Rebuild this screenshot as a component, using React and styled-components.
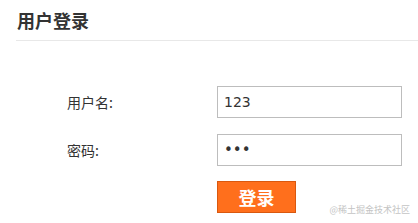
import React from "react";
import styled, { createGlobalStyle } from "styled-components";

const Global = createGlobalStyle`
  html, body { margin: 0; padding: 0; background: #fff; }
  body { font-family: "Noto Sans CJK SC", "Noto Sans", sans-serif; color: #333; }
`;

const Page = styled.div`
  width: 418px;
  height: 223px;
  position: relative;
  overflow: hidden;
  padding-left: 16px;
  box-sizing: border-box;
`;

const Header = styled.div`
  height: 41px;
  border-bottom: 1px solid #e8e8e8;
  display: flex;
  align-items: center;
  padding-left: 1px;
  box-sizing: border-box;
`;

const Title = styled.h1`
  margin: 0;
  font-size: 18px;
  font-weight: 700;
  color: #333;
  line-height: 1;
`;

const Form = styled.form`
  display: flex;
  flex-direction: column;
  padding: 45px 0 0 51px;
  gap: 16px;
`;

const Row = styled.div`
  display: flex;
  align-items: center;
`;

const Label = styled.label`
  width: 150px;
  font-size: 14px;
  color: #333;
`;

const Input = styled.input`
  width: 185px;
  height: 32px;
  box-sizing: border-box;
  border: 1px solid #bdbdbd;
  padding: 0 6px;
  font-size: 14px;
  font-family: Tahoma, "DejaVu Sans", sans-serif;
  color: #333;
  outline: none;
  &[type="password"] { font-size: 15px; }
`;

const Button = styled.button`
  margin-left: 150px;
  margin-top: -1px;
  width: 79px;
  height: 32px;
  background: #ff6f1c;
  border: 1px solid #d9580f;
  color: #fff;
  font-size: 18px;
  font-weight: 700;
  font-family: "Noto Sans CJK SC", sans-serif;
  padding: 0;
`;

const Watermark = styled.div`
  position: absolute;
  right: 8px;
  bottom: 7px;
  font-size: 9px;
  color: #c4c4c4;
  font-family: "Noto Sans CJK SC", sans-serif;
`;

export default function App() {
  return (
    <Page>
      <Global />
      <Header>
        <Title>用户登录</Title>
      </Header>
      <Form onSubmit={(e) => e.preventDefault()}>
        <Row>
          <Label>用户名:</Label>
          <Input defaultValue="123" />
        </Row>
        <Row>
          <Label>密码:</Label>
          <Input type="password" defaultValue="123" />
        </Row>
        <Row>
          <Button type="submit">登录</Button>
        </Row>
      </Form>
      <Watermark>@稀土掘金技术社区</Watermark>
    </Page>
  );
}
